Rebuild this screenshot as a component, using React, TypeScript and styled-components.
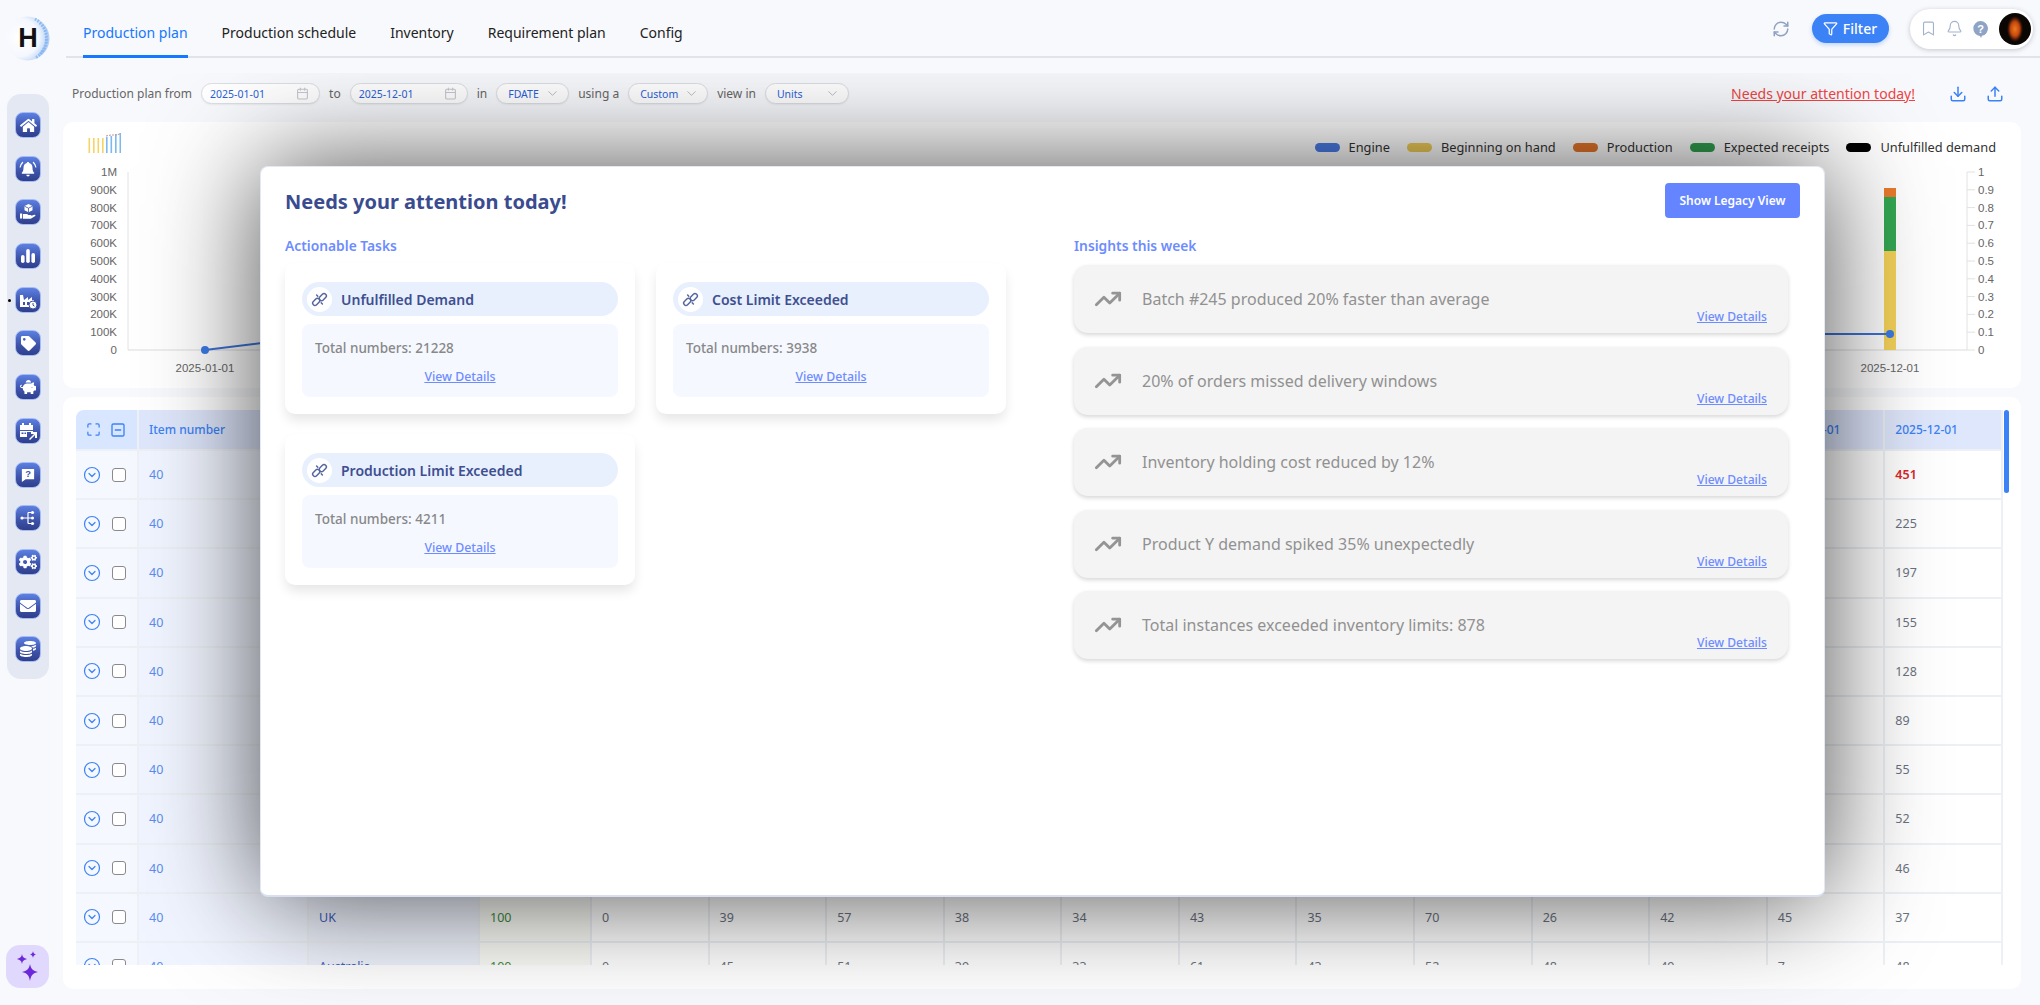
import React from 'react';
import styled, { createGlobalStyle } from 'styled-components';
import {
  Bell,
  Bookmark,
  Calendar,
  ChevronDown,
  CircleChevronDown,
  Download,
  Filter,
  Maximize,
  RefreshCw,
  SquareMinus,
  TrendingUp,
  Upload,
} from 'lucide-react';
import { FaCogs, FaCoins, FaEnvelope, FaHome, FaPiggyBank, FaTag } from 'react-icons/fa';

const GlobalStyle = createGlobalStyle`
  html, body {
    margin: 0;
    padding: 0;
    height: 100%;
    background: #f8f9fc;
  }
  body {
    font-family: "Noto Sans", "Open Sans", sans-serif;
  }
  * {
    box-sizing: border-box;
  }
`;

const Page = styled.div`
  width: 2040px;
  height: 1005px;
  display: flex;
  flex-direction: column;
  overflow: hidden;
  background: #f8f9fc;
`;

/* top bar */

const TopBar = styled.header`
  height: 58px;
  flex-shrink: 0;
  display: flex;
`;

const LogoCell = styled.div`
  width: 66px;
  flex-shrink: 0;
  padding: 16px 0 0 5px;
`;

const TopNav = styled.nav`
  flex: 1;
  display: flex;
  align-items: stretch;
  gap: 34px;
  padding-left: 17px;
  padding-right: 7px;
  border-bottom: 2px solid #e1e3ea;
`;

const Tab = styled.a<{ $active?: boolean }>`
  display: flex;
  align-items: center;
  height: 58px;
  padding-top: 10px;
  font-size: 14px;
  white-space: nowrap;
  color: ${props => (props.$active ? '#1677ff' : '#222')};
  border-bottom: 3px solid ${props => (props.$active ? '#1677ff' : 'transparent')};
`;

const TopActions = styled.div`
  margin-left: auto;
  display: flex;
  align-items: center;
  gap: 21.5px;
  height: 57px;
`;

const RefreshButton = styled.span`
  display: flex;
  color: #8ea2c2;
`;

const FilterButton = styled.button`
  width: 77px;
  height: 29px;
  border: none;
  border-radius: 15px;
  background: #3b82f6;
  color: #fff;
  font-family: inherit;
  font-size: 14px;
  font-weight: 500;
  display: flex;
  align-items: center;
  justify-content: center;
  gap: 5px;
  box-shadow: 0 2px 4px rgba(59, 130, 246, 0.3);
`;

const UserPill = styled.div`
  width: 123px;
  height: 40px;
  border-radius: 20px;
  background: #fff;
  box-shadow: 0 1px 5px rgba(60, 70, 100, 0.28);
  display: flex;
  align-items: center;
  padding-left: 10px;
  color: #a3b3cb;
`;

const PillIcon = styled.span`
  display: flex;
  margin-right: 9px;
`;

const Avatar = styled.span`
  width: 32px;
  height: 32px;
  margin-left: 1px;
  border-radius: 50%;
  background: radial-gradient(ellipse 8px 13px at 50% 50%, #ee7a1d 0%, #c4480e 55%, #3a1406 85%, #0a0604 100%);
`;

/* left rail */

const Body = styled.div`
  flex: 1;
  min-height: 0;
  display: flex;
`;

const LeftRail = styled.aside`
  width: 63px;
  flex-shrink: 0;
  display: flex;
  flex-direction: column;
  justify-content: space-between;
  padding: 36px 0 17px 6px;
`;

const RailPanel = styled.div`
  width: 42px;
  margin-left: 1px;
  padding: 18px 0 17px;
  border-radius: 14px;
  background: #e3e8f2;
  display: flex;
  flex-direction: column;
  align-items: center;
  gap: 17.7px;
`;

const RailButton = styled.span`
  position: relative;
  width: 26px;
  height: 26px;
  border-radius: 8px;
  border: 1px solid #a5bbf3;
  background: linear-gradient(180deg, #5c80e2 0%, #3d52a8 60%, #2f3f8c 100%);
  color: #fff;
  display: flex;
  align-items: center;
  justify-content: center;
`;

const ActiveDot = styled.span`
  position: absolute;
  left: -8px;
  top: 11px;
  width: 3px;
  height: 3px;
  border-radius: 50%;
  background: #000;
`;

const AiButton = styled.span`
  width: 43px;
  height: 43px;
  border-radius: 14px;
  background: #e0d9fd;
  display: flex;
  align-items: center;
  justify-content: center;
`;

/* main content */

const Main = styled.main`
  flex: 1;
  min-width: 0;
  margin-top: 15px;
  position: relative;
  overflow: hidden;
  display: flex;
  flex-direction: column;
`;

const FilterRow = styled.div`
  height: 49px;
  flex-shrink: 0;
  display: flex;
  align-items: center;
  gap: 9px;
  padding: 0 36px 8px 9px;
  font-size: 12px;
  color: #666;
`;

const DatePill = styled.span<{ $w: number }>`
  width: ${props => props.$w}px;
  height: 21px;
  border-radius: 11px;
  border: 1px solid #dcdee5;
  background: #fff;
  box-shadow: 0 1px 2px rgba(0, 0, 0, 0.06);
  color: #2b5fd9;
  font-size: 10.5px;
  display: flex;
  align-items: center;
  justify-content: space-between;
  padding: 0 10px 0 8px;
`;

const SelectBox = styled(DatePill)`
  padding: 0 8px 0 11px;
`;

const NeedsLink = styled.a`
  margin-left: auto;
  margin-right: 15px;
  color: #ef4444;
  font-size: 14px;
  text-decoration: underline;
`;

const IconAction = styled.span`
  display: flex;
  color: #3b82f6;
  margin-left: 10px;
`;

const ChartPanel = styled.section`
  width: 1958px;
  height: 266px;
  flex-shrink: 0;
  background: #fff;
  border-radius: 10px;
`;

const ChartHead = styled.div`
  height: 36px;
  display: flex;
  justify-content: space-between;
  padding: 11px 25px 0;
`;

const Legend = styled.div`
  display: flex;
  align-items: center;
  height: 18px;
  margin-top: 5px;
  gap: 17px;
  font-size: 12.8px;
  color: #333;
`;

const LegendItem = styled.span`
  display: flex;
  align-items: center;
  gap: 9px;
`;

const Swatch = styled.i<{ $color: string }>`
  width: 25px;
  height: 9px;
  border-radius: 5px;
  background: ${props => props.$color};
`;

const ChartText = styled.text`
  font-family: "Liberation Sans", Arial, sans-serif;
  font-size: 11.5px;
  fill: #666;
`;

const TablePanel = styled.section`
  width: 1958px;
  height: 592px;
  flex-shrink: 0;
  margin-top: 9px;
  padding: 13px 0 0 13px;
  background: #fff;
  border-radius: 10px;
  position: relative;
`;

const TableClip = styled.div`
  width: 1927px;
  height: 555px;
  overflow: hidden;
  border-radius: 8px 0 0 0;
  font-size: 12.5px;
`;

const Row = styled.div<{ $head?: boolean }>`
  height: ${props => (props.$head ? '41px' : '49.2px')};
  display: grid;
  grid-template-columns: 63px 170px 171px 112px repeat(12, 117.58px);
`;

const Cell = styled.div<{ $bg?: string; $color?: string; $bold?: boolean }>`
  display: flex;
  align-items: center;
  padding-left: 10px;
  border-right: 2px solid #edf0f4;
  border-bottom: 2px solid #edf0f4;
  white-space: nowrap;
  overflow: hidden;
  background: ${props => props.$bg || '#fff'};
  color: ${props => props.$color || '#6b7280'};
  font-weight: ${props => (props.$bold ? 600 : 400)};
`;

const HeadCell = styled(Cell)`
  background: #dfe7fc;
  color: #3b82f6;
  font-weight: 500;
  font-size: 12px;
`;

const CornerCell = styled(HeadCell)`
  background: #d9e6ff;
  gap: 9px;
`;

const ToggleCell = styled(Cell)`
  background: #f5f8ff;
  padding-left: 7px;
  gap: 11px;
  color: #3b82f6;
`;

const CheckBox = styled.input`
  appearance: none;
  width: 14px;
  height: 14px;
  margin: 0;
  border: 1.5px solid #8a8a8a;
  border-radius: 3px;
  background: #fff;
`;

const ScrollThumb = styled.span`
  position: absolute;
  left: 1941px;
  top: 13px;
  width: 5px;
  height: 83px;
  border-radius: 3px;
  background: #3b82f6;
`;

/* attention modal */

const Modal = styled.div`
  position: absolute;
  left: 197px;
  top: 93px;
  width: 1565px;
  height: 731px;
  background: #fff;
  border-radius: 8px;
  border: 1px solid #e3e9f4;
  border-bottom: 2px solid #d8e0ef;
  box-shadow: 0 0 110px rgba(0, 0, 0, 0.7);
  padding: 16px 24px 0 24px;
`;

const ModalHead = styled.div`
  height: 35px;
  display: flex;
  align-items: center;
  justify-content: space-between;
`;

const ModalTitle = styled.h2`
  margin: 2px 0 0;
  font-size: 20px;
  font-weight: 700;
  color: #3a4b8f;
`;

const LegacyButton = styled.button`
  width: 135px;
  height: 35px;
  border: none;
  border-radius: 4px;
  background: #6485ff;
  color: #fff;
  font-family: inherit;
  font-size: 12px;
  font-weight: 600;
`;

const Columns = styled.div`
  display: grid;
  grid-template-columns: 789px 714px;
  margin-top: 18px;
`;

const SectionTitle = styled.h3`
  margin: 0;
  height: 20px;
  line-height: 20px;
  font-size: 13.8px;
  font-weight: 600;
  color: #6d8cff;
`;

const TaskGrid = styled.div`
  display: grid;
  grid-template-columns: 350px 350px;
  grid-auto-rows: 151px;
  gap: 20px 21px;
  margin-top: 7px;
`;

const TaskCard = styled.div`
  padding: 19px 17px 17px;
  background: #fff;
  border-radius: 10px;
  box-shadow: 0 7px 12px -1px rgba(0, 0, 0, 0.1);
  display: flex;
  flex-direction: column;
  gap: 8px;
`;

const TaskHead = styled.div`
  height: 34px;
  border-radius: 17px;
  background: #e8f0fe;
  padding-left: 5px;
  display: flex;
  align-items: center;
  gap: 9px;
  font-size: 14px;
  font-weight: 600;
  color: #3e4f90;
`;

const TaskIcon = styled.span`
  width: 25px;
  height: 25px;
  border-radius: 50%;
  background: #fff;
  display: flex;
  align-items: center;
  justify-content: center;
`;

const TaskBody = styled.div`
  height: 73px;
  border-radius: 8px;
  background: #f5f8ff;
  padding: 15px 13px 0;
  display: flex;
  flex-direction: column;
  gap: 11px;
  font-size: 13.5px;
  font-weight: 500;
  color: #888;
`;

const DetailsLink = styled.a`
  font-size: 12.3px;
  font-weight: 500;
  color: #6d8cff;
  text-decoration: underline;
`;

const CenterLink = styled(DetailsLink)`
  align-self: center;
`;

const InsightList = styled.div`
  display: flex;
  flex-direction: column;
  gap: 13.6px;
  margin-top: 9px;
`;

const InsightCard = styled.div`
  height: 68px;
  padding: 0 21px 0 20px;
  border-radius: 14px;
  background: #f4f4f4;
  box-shadow: 0 2px 4px rgba(0, 0, 0, 0.16);
  display: flex;
  align-items: center;
  gap: 20px;
  color: #919191;
  font-size: 16px;
`;

const InsightLink = styled(DetailsLink)`
  margin-left: auto;
  align-self: flex-end;
  margin-bottom: 8px;
  font-size: 12.1px;
`;

/* small drawings */

function Logo() {
  return (
    <svg width="45" height="45" viewBox="0 0 45 45">
      <defs>
        <radialGradient id="logoBall" cx="32%" cy="48%" r="72%">
          <stop offset="0%" stopColor="#ffffff" />
          <stop offset="60%" stopColor="#f4f7fe" />
          <stop offset="100%" stopColor="#a5c8f6" />
        </radialGradient>
      </defs>
      <circle cx="22.5" cy="22.5" r="22" fill="url(#logoBall)" />
      <path d="M30 3a22 22 0 0 1 0 39M35 7a22 22 0 0 1 0 31" fill="none" stroke="#8cb8f0" strokeWidth="3" strokeDasharray="1.5 1.5" />
      <text x="23" y="31" textAnchor="middle" fontFamily="Liberation Sans, sans-serif" fontWeight="700" fontSize="27" fill="#111">H</text>
    </svg>
  );
}

function HelpBubble() {
  return (
    <svg width="17" height="18" viewBox="0 0 17 18">
      <path d="M8.500 1a7.500 7.500 0 0 1 1.500 14.850L9 18l-1-2.050A7.500 7.500 0 0 1 8.500 1z" fill="#8fa3c4" />
      <text x="8.500" y="12.500" textAnchor="middle" fontSize="11" fontWeight="700" fontFamily="Liberation Sans, sans-serif" fill="#fff">?</text>
    </svg>
  );
}

function BellRinging() {
  return (
    <svg width="18" height="18" viewBox="0 0 18 18" fill="#fff">
      <path d="M9 2c.7 0 1.200.5 1.200 1.100 2.300.6 3.300 2.500 3.300 4.900 0 2.400.7 3.700 1.700 4.800.3.400 0 .9-.4.900H3.200c-.4 0-.7-.5-.4-.9 1-1.100 1.700-2.400 1.700-4.800 0-2.400 1-4.300 3.300-4.900C7.800 2.500 8.300 2 9 2z" />
      <path d="M7.300 14.800h3.400a1.700 1.700 0 0 1-3.400 0z" />
      <path d="M3.600 2.500A8 8 0 0 0 1.200 7M14.400 2.500A8 8 0 0 1 16.800 7" fill="none" stroke="#fff" strokeWidth="1.200" strokeLinecap="round" />
    </svg>
  );
}

function HandBox() {
  return (
    <svg width="18" height="18" viewBox="0 0 18 18" fill="#fff">
      <path d="M9.500 1l4 2v4.200l-4 2-4-2V3z" />
      <path d="M5.500 3.200l4 2 4-2M9.500 5.200v4" stroke="#3d52a8" strokeWidth=".8" fill="none" />
      <path d="M1 10.500h2.200v5H1zM4 11h3.200c1 0 1.600.4 2 1h2.300c.6 0 .9.3.9.8l3-1c.8-.2 1.400.6.8 1.200l-4 2.400c-.5.3-1 .4-1.500.4H4z" />
    </svg>
  );
}

function Bars() {
  return (
    <svg width="18" height="18" viewBox="0 0 18 18" fill="#fff">
      <rect x="2" y="8" width="3.600" height="8" rx="1.800" />
      <rect x="7.200" y="2" width="3.600" height="14" rx="1.800" />
      <rect x="12.400" y="6" width="3.600" height="10" rx="1.800" />
    </svg>
  );
}

function FactoryClock() {
  return (
    <svg width="20" height="20" viewBox="0 0 20 20">
      <path d="M2 17V5h3l1 5 4-3v3l4-3v3h2v7z" fill="#fff" />
      <rect x="5" y="12" width="2" height="3" fill="#3d52a8" />
      <rect x="9" y="12" width="2" height="3" fill="#3d52a8" />
      <circle cx="15" cy="15" r="4" fill="#fff" stroke="#3d52a8" />
      <path d="M15 13v2.200l1.500 1" stroke="#3d52a8" strokeWidth="1" fill="none" />
    </svg>
  );
}

function CalendarArrow() {
  return (
    <svg width="20" height="20" viewBox="0 0 20 20" fill="#fff">
      <path d="M2 4h2V2h2v2h5V2h2v2h2v5H2z" />
      <path d="M2 10h13v1H9v5H2zM3.500 11.500v1.500h2v-1.500zM6.500 11.500v1.500h1.500v-1.500z" />
      <path d="M11 18l5-5h-3v-2h6v6h-2v-3l-5 5z" />
    </svg>
  );
}

function QuestionBubble() {
  return (
    <svg width="16" height="16" viewBox="0 0 17 17">
      <path d="M2 2h13v11H6l-4 3z" fill="#fff" />
      <text x="8.500" y="11" textAnchor="middle" fontSize="10" fontWeight="700" fontFamily="Liberation Sans, sans-serif" fill="#3d52a8">?</text>
    </svg>
  );
}

function Hierarchy() {
  return (
    <svg width="18" height="18" viewBox="0 0 18 18" fill="#fff" stroke="#fff">
      <path d="M4 9h5M9 3.500v11M9 3.500h3M9 9h3M9 14.500h3" fill="none" strokeWidth="1.200" />
      <circle cx="3" cy="9" r="1.600" stroke="none" />
      <circle cx="13.500" cy="3.500" r="1.600" stroke="none" />
      <circle cx="13.500" cy="9" r="1.600" stroke="none" />
      <circle cx="13.500" cy="14.500" r="1.600" stroke="none" />
    </svg>
  );
}

function ChainLink() {
  return (
    <svg width="17" height="17" viewBox="0 0 17 17" fill="none" stroke="#56679f" strokeWidth="1.500">
      <rect x="1.200" y="8.600" width="8" height="4.600" rx="2.300" transform="rotate(-45 5.200 10.900)" />
      <rect x="7.800" y="3.800" width="8" height="4.600" rx="2.300" transform="rotate(-45 11.800 6.100)" />
      <path d="M6.800 5.200l-1.200-1.200M10.200 11.800l1.200 1.200" strokeLinecap="round" />
    </svg>
  );
}

function Sparkles() {
  return (
    <svg width="30" height="32" viewBox="0 0 30 32" fill="#6d28d9">
      <path d="M17 13c1 5 3 7 8 8-5 1-7 3-8 9-1-6-3-8-8-9 5-1 7-3 8-8z" />
      <path d="M9 3c.6 3 1.600 4 5 5-3.400 1-4.400 2-5 5-.6-3-1.600-4-5-5 3.400-1 4.400-2 5-5z" />
      <path d="M20 0c.3 2 1 3 3 3.500-2 .5-2.700 1.500-3 3.500-.3-2-1-3-3-3.500 2-.5 2.700-1.500 3-3.500z" />
    </svg>
  );
}

function MiniChart() {
  return (
    <svg width="33" height="20" viewBox="0 0 33 20">
      {[0.5, 5, 9.5, 14].map(x => (
        <rect key={x} x={x} y="5" width="1.600" height="15" fill="#f6d365" />
      ))}
      {[18.5, 23, 27.5, 32].map((x, i) => (
        <rect key={x} x={x - 0.5} y={[4, 3, 1, 0][i]} width="1.600" height={[16, 17, 19, 20][i]} fill="#7db9ec" />
      ))}
      <path d="M18 3l5-1 5 0 4-1" stroke="#c9918f" strokeWidth="1" fill="none" strokeDasharray="2 1" />
    </svg>
  );
}

const railIcons = [
  <FaHome size={17} />,
  <BellRinging />,
  <HandBox />,
  <Bars />,
  <FactoryClock />,
  <FaTag size={15} />,
  <FaPiggyBank size={16} />,
  <CalendarArrow />,
  <QuestionBubble />,
  <Hierarchy />,
  <FaCogs size={18} />,
  <FaEnvelope size={16} />,
  <FaCoins size={16} />,
];

const legend = [
  { label: 'Engine', color: '#4a7de8' },
  { label: 'Beginning on hand', color: '#efcd56' },
  { label: 'Production', color: '#e6762a' },
  { label: 'Expected receipts', color: '#31a04f' },
  { label: 'Unfulfilled demand', color: '#000' },
];

const leftTicks = ['1M', '900K', '800K', '700K', '600K', '500K', '400K', '300K', '200K', '100K', '0'];
const rightTicks = ['1', '0.9', '0.8', '0.7', '0.6', '0.5', '0.4', '0.3', '0.2', '0.1', '0'];

function PlanChart() {
  return (
    <svg width="1958" height="230" viewBox="0 0 1958 230">
      <line x1="65" y1="14" x2="65" y2="192" stroke="#e2e2e2" />
      <line x1="65" y1="192" x2="1904" y2="192" stroke="#dcdcdc" />
      <line x1="1904" y1="14" x2="1904" y2="192" stroke="#e2e2e2" />
      {leftTicks.map((t, i) => (
        <ChartText key={t} x="54" y={18 + i * 17.8} textAnchor="end">{t}</ChartText>
      ))}
      {rightTicks.map((t, i) => (
        <React.Fragment key={t}>
          <line x1="1904" y1={14 + i * 17.8} x2="1912" y2={14 + i * 17.8} stroke="#e2e2e2" />
          <ChartText x="1915" y={18 + i * 17.8}>{t}</ChartText>
        </React.Fragment>
      ))}
      <rect x="1821" y="93" width="12" height="99" fill="#f5d35a" />
      <rect x="1821" y="39" width="12" height="54" fill="#34a853" />
      <rect x="1821" y="30" width="12" height="9" fill="#ea7b2d" />
      <polyline points="142,192 215,183 1000,176 1827,176" fill="none" stroke="#3b72d9" strokeWidth="2" />
      <circle cx="142" cy="192" r="4" fill="#3b7be8" />
      <circle cx="1827" cy="176" r="4" fill="#3b7be8" />
      <ChartText x="142" y="214" textAnchor="middle">2025-01-01</ChartText>
      <ChartText x="1827" y="214" textAnchor="middle">2025-12-01</ChartText>
    </svg>
  );
}

const months = Array.from({ length: 12 }, (_, i) => `2025-${String(i + 1).padStart(2, '0')}-01`);

const rows = [
  { place: 'USA', plan: 100, values: [0, 62, 71, 48, 50, 66, 41, 58, 73, 60, 64, 451] },
  { place: 'Canada', plan: 100, values: [0, 44, 39, 52, 61, 37, 49, 45, 33, 58, 40, 225] },
  { place: 'Germany', plan: 100, values: [0, 51, 36, 47, 42, 59, 38, 60, 44, 35, 53, 197] },
  { place: 'France', plan: 100, values: [0, 38, 55, 41, 60, 34, 47, 39, 56, 48, 37, 155] },
  { place: 'Japan', plan: 100, values: [0, 46, 42, 57, 35, 52, 61, 33, 49, 40, 44, 128] },
  { place: 'India', plan: 100, values: [0, 59, 48, 36, 44, 40, 53, 62, 37, 51, 46, 89] },
  { place: 'Brazil', plan: 100, values: [0, 33, 60, 45, 39, 56, 36, 47, 58, 42, 50, 55] },
  { place: 'Mexico', plan: 100, values: [0, 41, 37, 63, 48, 35, 57, 44, 31, 54, 39, 52] },
  { place: 'Spain', plan: 100, values: [0, 54, 46, 32, 59, 43, 40, 51, 47, 36, 60, 46] },
  { place: 'UK', plan: 100, values: [0, 39, 57, 38, 34, 43, 35, 70, 26, 42, 45, 37] },
  { place: 'Australia', plan: 100, values: [0, 45, 51, 39, 33, 61, 43, 52, 48, 49, 7, 48] },
];

const taskCards = [
  { title: 'Unfulfilled Demand', total: 21228 },
  { title: 'Cost Limit Exceeded', total: 3938 },
  { title: 'Production Limit Exceeded', total: 4211 },
];

const insights = [
  'Batch #245 produced 20% faster than average',
  '20% of orders missed delivery windows',
  'Inventory holding cost reduced by 12%',
  'Product Y demand spiked 35% unexpectedly',
  'Total instances exceeded inventory limits: 878',
];

function SelectPill({ label, width }: { label: string; width: number }) {
  return (
    <SelectBox $w={width}>
      {label}
      <ChevronDown size={15} color="#9aa0ac" strokeWidth={1.1} />
    </SelectBox>
  );
}

export default function App() {
  return (
    <Page>
      <GlobalStyle />
      <TopBar>
        <LogoCell>
          <Logo />
        </LogoCell>
        <TopNav>
          <Tab $active>Production plan</Tab>
          <Tab>Production schedule</Tab>
          <Tab>Inventory</Tab>
          <Tab>Requirement plan</Tab>
          <Tab>Config</Tab>
          <TopActions>
            <RefreshButton>
              <RefreshCw size={18} />
            </RefreshButton>
            <FilterButton>
              <Filter size={15} />
              Filter
            </FilterButton>
            <UserPill>
              <PillIcon>
                <Bookmark size={17} strokeWidth={1.6} />
              </PillIcon>
              <PillIcon>
                <Bell size={17} strokeWidth={1.6} />
              </PillIcon>
              <PillIcon>
                <HelpBubble />
              </PillIcon>
              <Avatar />
            </UserPill>
          </TopActions>
        </TopNav>
      </TopBar>
      <Body>
        <LeftRail>
          <RailPanel>
            {railIcons.map((icon, i) => (
              <RailButton key={i}>
                {i === 4 && <ActiveDot />}
                {icon}
              </RailButton>
            ))}
          </RailPanel>
          <AiButton>
            <Sparkles />
          </AiButton>
        </LeftRail>
        <Main>
          <FilterRow>
            Production plan from
            <DatePill $w={119}>
              2025-01-01
              <Calendar size={13} color="#c4c7cf" />
            </DatePill>
            to
            <DatePill $w={118}>
              2025-12-01
              <Calendar size={13} color="#c4c7cf" />
            </DatePill>
            in
            <SelectPill label="FDATE" width={73} />
            using a
            <SelectPill label="Custom" width={80} />
            view in
            <SelectPill label="Units" width={84} />
            <NeedsLink>Needs your attention today!</NeedsLink>
            <IconAction>
              <Download size={18} />
            </IconAction>
            <IconAction>
              <Upload size={18} />
            </IconAction>
          </FilterRow>
          <ChartPanel>
            <ChartHead>
              <MiniChart />
              <Legend>
                {legend.map(item => (
                  <LegendItem key={item.label}>
                    <Swatch $color={item.color} />
                    {item.label}
                  </LegendItem>
                ))}
              </Legend>
            </ChartHead>
            <PlanChart />
          </ChartPanel>
          <TablePanel>
            <TableClip>
              <Row $head>
                <CornerCell>
                  <Maximize size={15} />
                  <SquareMinus size={16} />
                </CornerCell>
                <HeadCell>Item number</HeadCell>
                <HeadCell>Location</HeadCell>
                <HeadCell>Plan</HeadCell>
                {months.map(m => (
                  <HeadCell key={m}>{m}</HeadCell>
                ))}
              </Row>
              {rows.map((row, r) => (
                <Row key={row.place}>
                  <ToggleCell>
                    <CircleChevronDown size={18} strokeWidth={1.6} />
                    <CheckBox type="checkbox" />
                  </ToggleCell>
                  <Cell $bg="#f1f5ff" $color="#5b8def">40</Cell>
                  <Cell $bg="#eef2fc" $color="#3f5fc0">{row.place}</Cell>
                  <Cell $bg="#fafaf6" $color="#3c8a3c">{row.plan}</Cell>
                  {row.values.map((v, i) => (
                    <Cell
                      key={i}
                      $color={r === 0 && i === 11 ? '#dc2626' : undefined}
                      $bold={r === 0 && i === 11}
                    >
                      {v}
                    </Cell>
                  ))}
                </Row>
              ))}
            </TableClip>
            <ScrollThumb />
          </TablePanel>
          <Modal>
            <ModalHead>
              <ModalTitle>Needs your attention today!</ModalTitle>
              <LegacyButton>Show Legacy View</LegacyButton>
            </ModalHead>
            <Columns>
              <div>
                <SectionTitle>Actionable Tasks</SectionTitle>
                <TaskGrid>
                  {taskCards.map(card => (
                    <TaskCard key={card.title}>
                      <TaskHead>
                        <TaskIcon>
                          <ChainLink />
                        </TaskIcon>
                        {card.title}
                      </TaskHead>
                      <TaskBody>
                        Total numbers: {card.total}
                        <CenterLink>View Details</CenterLink>
                      </TaskBody>
                    </TaskCard>
                  ))}
                </TaskGrid>
              </div>
              <div>
                <SectionTitle>Insights this week</SectionTitle>
                <InsightList>
                  {insights.map(text => (
                    <InsightCard key={text}>
                      <TrendingUp size={28} strokeWidth={2.4} color="#949494" />
                      {text}
                      <InsightLink>View Details</InsightLink>
                    </InsightCard>
                  ))}
                </InsightList>
              </div>
            </Columns>
          </Modal>
        </Main>
      </Body>
    </Page>
  );
}
